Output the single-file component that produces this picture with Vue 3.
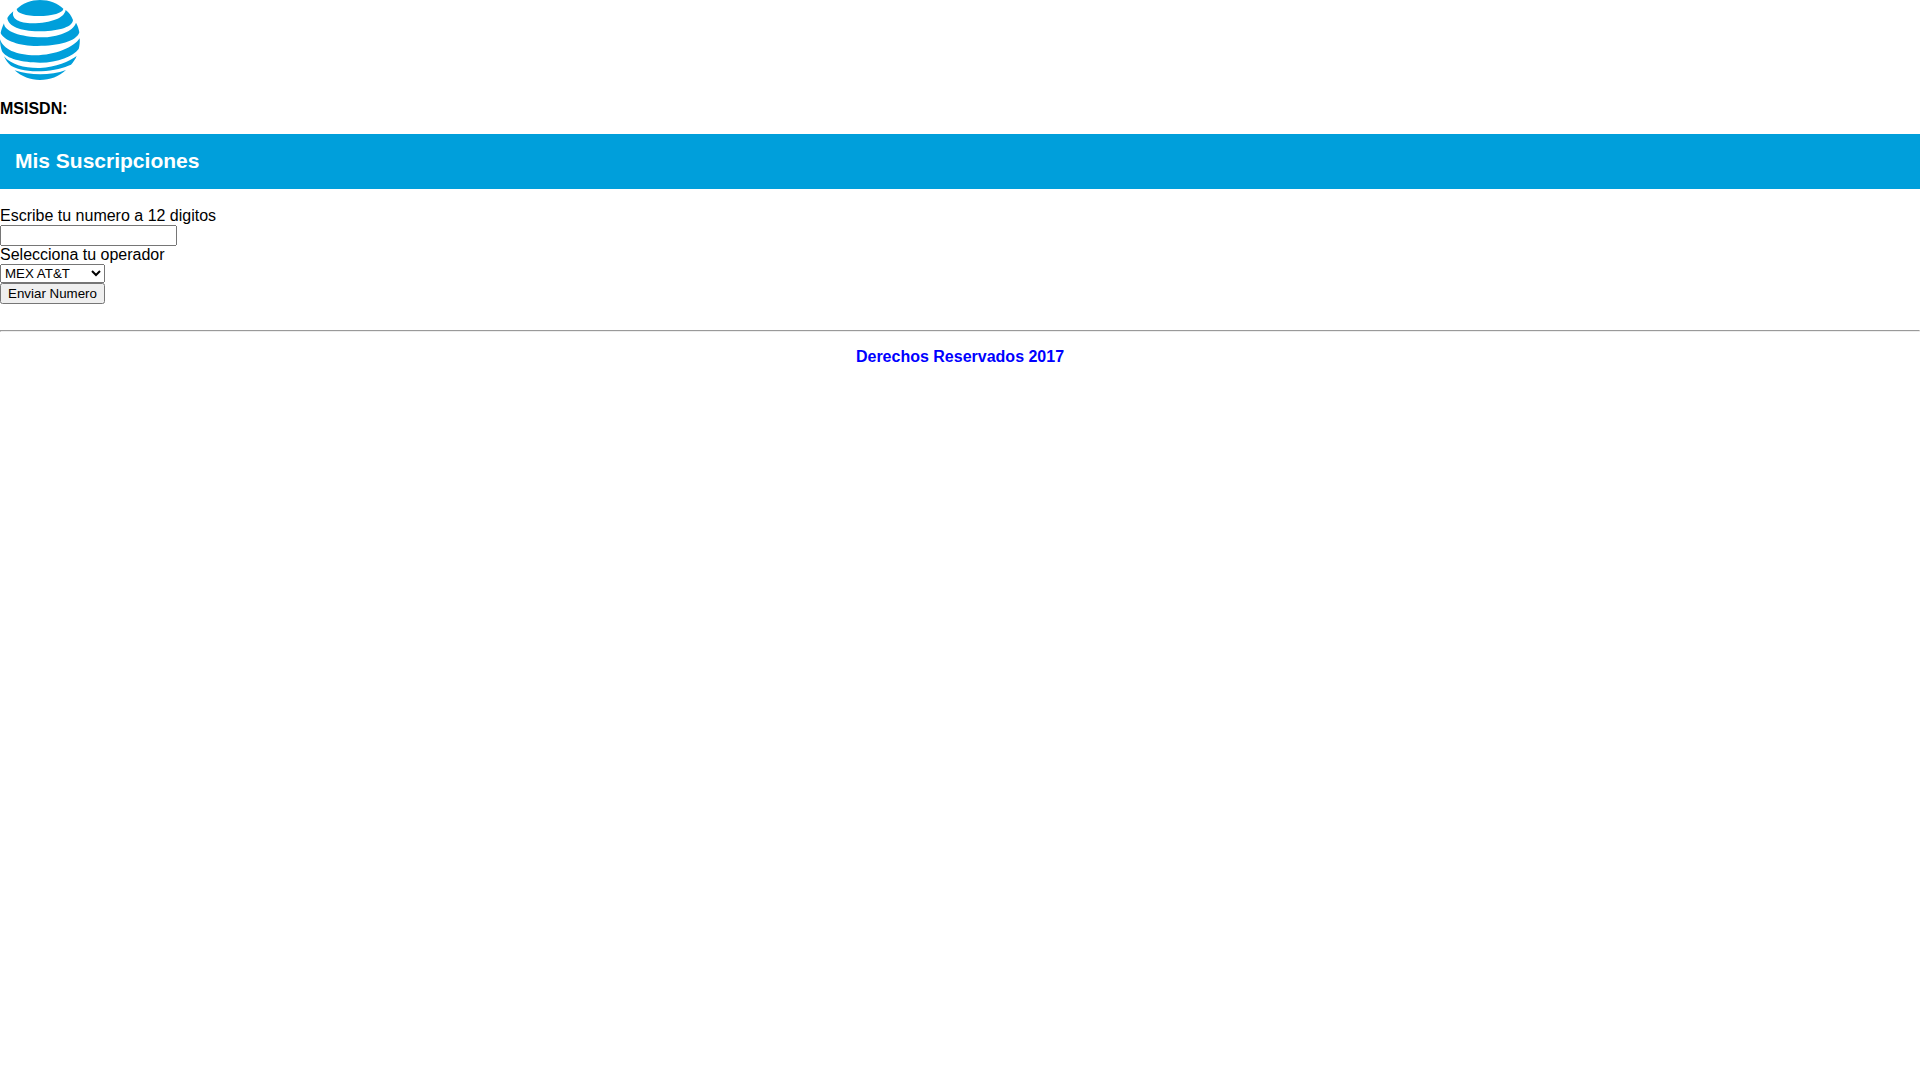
<script setup>
import { ref } from 'vue'

const numero = ref('')
const operador = ref('MEX AT&T')
</script>

<template>
  <div class="page">
    <header>
      <svg class="logo" viewBox="0 0 240 240" role="img" aria-label="AT&amp;T">
        <path d="M50 27C69 9 94 0 120 0C148 0 172 9 190 26C190 38 157 48 116 48C77 48 50 40 50 27Z" />
        <path d="M40 34C32 41 26 47 22 54C24 78 62 94 115 94C168 94 217 84 219 60C214 47 207 37 197 30C193 54 154 69 97 70C58 70 33 57 40 34Z" />
        <path d="M12 70C7 80 4 90 2 99C12 122 58 138 112 138C176 138 230 124 238 97C236 86 233 77 228 68C221 94 172 112 125 112C62 112 12 94 12 70Z" />
        <path d="M0 118C0 131 2 142 6 154C18 176 67 188 120 188C175 188 219 169 236 147C239 137 240 127 239 115C223 141 165 166 106 166C48 166 9 147 0 118Z" />
        <path d="M12 169C17 180 24 191 33 197C56 210 88 214 124 214C161 212 193 203 213 194C220 186 226 178 230 168C208 185 168 201 120 204C75 205 34 195 12 169Z" />
        <path d="M44 211C65 230 91 240 120 240C150 240 177 230 198 210C152 227 92 227 44 211Z" />
      </svg>
      <p class="msisdn">MSISDN:</p>
    </header>
    <h1 class="title">Mis Suscripciones</h1>
    <form class="form" @submit.prevent>
      <label for="numero">Escribe tu numero a 12 digitos</label>
      <input id="numero" v-model="numero" type="text" />
      <label for="operador">Selecciona tu operador</label>
      <select id="operador" v-model="operador">
        <option>MEX AT&amp;T</option>
      </select>
      <button type="submit">Enviar Numero</button>
    </form>
    <hr />
    <footer><a href="#">Derechos Reservados 2017</a></footer>
  </div>
</template>

<style>
body {
  margin: 0;
  background: #fff;
}
</style>

<style scoped>
.page {
  font-family: "Liberation Sans", Arial, sans-serif;
  font-size: 16px;
  line-height: 18px;
  color: #000;
}
.logo {
  display: block;
  width: 80px;
  height: 80px;
  fill: #009fdb;
}
.msisdn {
  margin: 20px 0 16px;
  font-weight: bold;
}
.title {
  margin: 0;
  padding: 14px 15px 16px;
  background: #009fdb;
  color: #fff;
  font-size: 21px;
  line-height: 25px;
}
.form {
  display: flex;
  flex-direction: column;
  align-items: flex-start;
  margin-top: 18px;
}
input,
select,
button {
  box-sizing: border-box;
  margin: 0;
  font-family: inherit;
}
input {
  width: 177px;
  height: 21px;
}
select {
  width: 105px;
  height: 19px;
}
button {
  width: 105px;
  height: 21px;
  padding: 1px 6px;
}
hr {
  margin: 26px 0 16px;
}
footer {
  text-align: center;
  font-weight: bold;
}
footer a {
  color: #00f;
  text-decoration: none;
}
</style>
